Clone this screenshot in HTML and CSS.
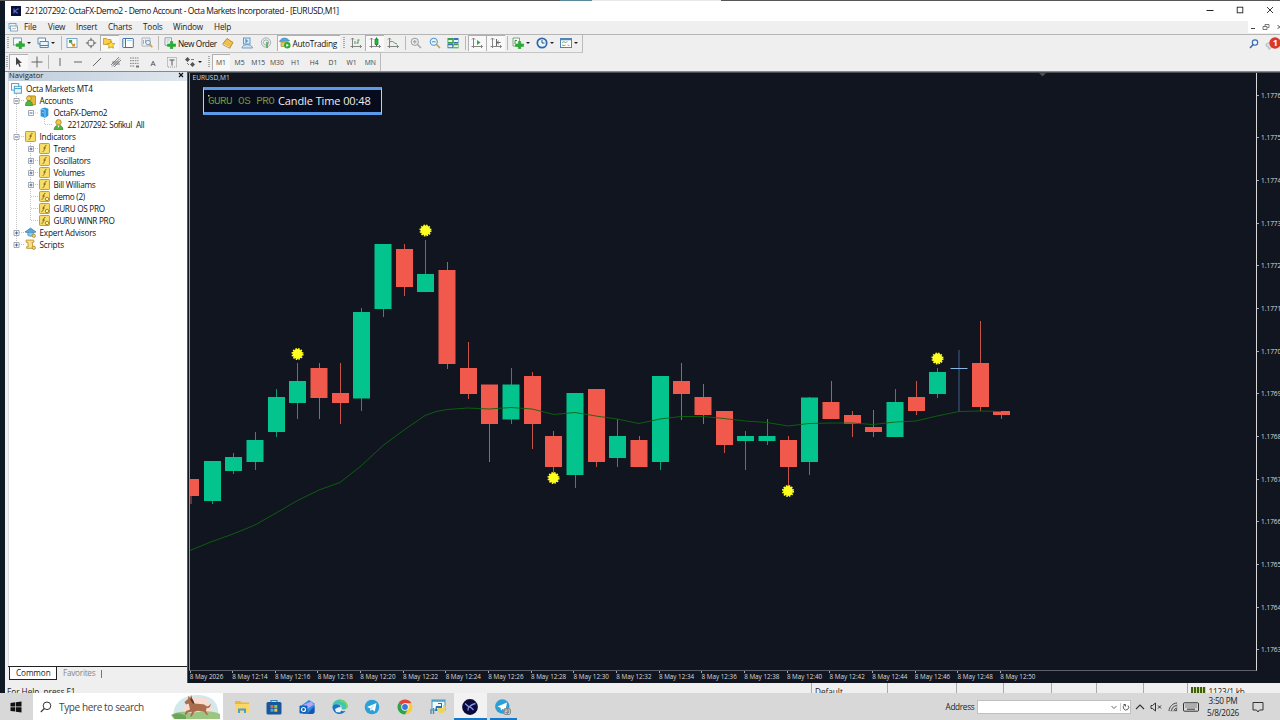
FILE: index.html
```html
<!DOCTYPE html>
<html lang="en">
<head>
<meta charset="utf-8">
<title>221207292: OctaFX-Demo2 - Demo Account</title>
<link rel="stylesheet" href="styles.css">
</head>
<body>
<svg class="defs" width="0" height="0">
  <defs>
    <symbol id="func" viewBox="0 0 10 10"><rect x=".5" y=".5" width="9" height="9" rx=".6" fill="#f8df6a" stroke="#c79a24" stroke-width=".9"/><path d="M6.800 2.300C5.500 2 5.500 3 5.100 4.700S4.500 7.900 3.300 7.700M4 4.600h2.300" fill="none" stroke="#7a5a14" stroke-width=".8"/></symbol>
    <symbol id="funcgear" viewBox="0 0 10 10"><rect x=".5" y=".5" width="9" height="9" rx=".6" fill="#f8df6a" stroke="#c79a24" stroke-width=".9"/><path d="M5.800 2.300C4.500 2 4.500 3 4.100 4.700S3.500 7.900 2.300 7.700M3 4.600h2.300" fill="none" stroke="#7a5a14" stroke-width=".8"/><circle cx="7.300" cy="7.300" r="1.600" fill="#fff3b0" stroke="#9c7414" stroke-width=".8"/></symbol>
    <symbol id="burst" viewBox="-7 -7 14 14"><circle r="4.900" fill="#ffff1e"/><circle r="5.200" fill="none" stroke="#ffff1e" stroke-width="1.700" stroke-dasharray="1.500 1.222"/></symbol>
    <symbol id="axes" viewBox="0 0 12 12"><path d="M2.500 1v10M.5 9.500h11M1 2.500l1.500-1.500L4 2.500M10 8l1.500 1.500L10 11" fill="none" stroke="#777" stroke-width=".9"/></symbol>
  </defs>
</svg>
<div class="desktop">
  <div class="topstrip"><i></i></div>
  <div class="window">
    <header class="titlebar">
      <svg class="logo" viewBox="0 0 10 10"><rect width="10" height="10" fill="#0b0f38"/><path d="M3 2.500v5M7.500 2.500L3.600 5l3 2.300" fill="none" stroke="#5a73d8" stroke-width="1.100"/></svg>
      <span class="caption">221207292: OctaFX-Demo2 - Demo Account - Octa Markets Incorporated - [EURUSD,M1]</span>
      <div class="winbtns">
        <svg viewBox="0 0 8 8"><path d="M.5 4.500h7" stroke="#222" fill="none"/></svg>
        <svg viewBox="0 0 8 8"><rect x="1.200" y="1.200" width="5.600" height="5.600" stroke="#222" fill="none" stroke-width=".9"/></svg>
        <svg viewBox="0 0 8 8"><path d="M1 1l6 6M7 1L1 7" stroke="#222" fill="none" stroke-width=".9"/></svg>
      </div>
    </header>
    <nav class="menubar">
      <svg class="mico" viewBox="0 0 10 9"><rect x="1" y=".5" width="7" height="5" fill="#e8f4fc" stroke="#5b9bc8" stroke-width=".8"/><rect x="2.500" y="3" width="7" height="5" fill="#fff" stroke="#5b9bc8" stroke-width=".8"/><path d="M4 6.500l1.500-1.500 1 1L8.500 4.500" stroke="#d08040" fill="none" stroke-width=".7"/></svg>
      <span class="m1">File</span><span class="m2">View</span><span class="m3">Insert</span><span class="m4">Charts</span><span class="m5">Tools</span><span class="m6">Window</span><span class="m7">Help</span>
      <div class="mdibtns">
        <svg viewBox="0 0 8 8"><path d="M2 5.500h4" stroke="#444"/></svg>
        <svg viewBox="0 0 8 8"><path d="M3 3.500V1.500h4v3H5.500M1 3.500h4v3H1z" stroke="#555" fill="none" stroke-width=".8"/></svg>
        <svg viewBox="0 0 8 8"><path d="M2.500 2l4 4M6.500 2l-4 4" stroke="#444" stroke-width=".9"/></svg>
      </div>
    </nav>
    <div class="tbrow row1">
      <div class="toolbar">
        <i class="grip"></i>
        <span class="drop"><svg viewBox="0 0 12 12"><rect x=".5" y="1" width="8" height="7" fill="#f4fbff" stroke="#6b8ba5" stroke-width=".8"/><path d="M6 4.500h2.600v2.300H11.500v2.600H8.600v2.300H6V9.400H3.200V6.800H6z" fill="#25b32e" stroke="#168020" stroke-width=".4"/></svg><b></b></span>
        <span class="drop"><svg viewBox="0 0 12 12"><path d="M1 1h7.500v6H1z" fill="#fff" stroke="#4c7fae" stroke-width=".9"/><path d="M3 4.500h8.300v6H3z" fill="#eaf4fc" stroke="#4c7fae" stroke-width=".9"/><path d="M3 8.500h8.500" stroke="#4c7fae"/></svg><b></b></span>
        <i class="sep"></i>
        <span class="tool"><svg viewBox="0 0 12 12"><rect x="1" y="1.500" width="10" height="9" fill="#fff" stroke="#6ea0c8" stroke-width=".9"/><path d="M3 3h3.200v2.800H3z" fill="#2fa84a"/><path d="M5 6l3.500 3M8.500 6.500V9H6" stroke="#d08820" fill="none" stroke-width="1.200"/></svg></span>
        <span class="tool"><svg viewBox="0 0 12 12"><circle cx="6" cy="6" r="3.300" fill="none" stroke="#666" stroke-width=".9"/><path d="M6 .8v3.200M6 8v3.200M.8 6H4M8 6h3.200" stroke="#666" stroke-width="1"/></svg></span>
        <span class="tool on"><svg viewBox="0 0 12 12"><path d="M.5 1.500h3l1 1H8V7.500H.5z" fill="#f7cf4d" stroke="#b98a1b" stroke-width=".7"/><path d="M8 4l1.200 2.400 2.600.3-1.900 1.800.5 2.700L8 10l-2.400 1.200.5-2.700L4.200 6.700l2.600-.3z" fill="#ffe040" stroke="#c08b10" stroke-width=".7"/></svg></span>
        <span class="tool"><svg viewBox="0 0 12 12"><rect x=".8" y="1.500" width="10.500" height="9" rx=".5" fill="#fff" stroke="#3f76ae"/><path d="M3.500 2v8" stroke="#3f76ae"/><path d="M5 3.500h5M1.500 4h1.200M1.500 6h1.200" stroke="#8fb4d8" stroke-width=".7"/></svg></span>
        <span class="tool"><svg viewBox="0 0 12 12"><path d="M1 1h8v8H1z" fill="#f5f5f5" stroke="#9aa6b0" stroke-width=".8"/><path d="M2.500 7V3M4.500 6V2.500" stroke="#999" stroke-width=".8"/><circle cx="7" cy="5.500" r="2.300" fill="#e4f2fb" stroke="#6d8ba4" stroke-width=".9"/><path d="M8.700 7.300l2.600 3" stroke="#c79a4a" stroke-width="1.400"/></svg></span>
        <i class="sep s5"></i>
        <span class="wide neworder"><svg viewBox="0 0 12 12"><path d="M1 .8h6.500v7.500H1z" fill="#f4f8fb" stroke="#7d8d9a" stroke-width=".8"/><path d="M2.500 3h3.500M2.500 5h2" stroke="#8aa" stroke-width=".7"/><path d="M6.300 4.500h2.500v2.400h2.900v2.500H8.800v2.300H6.300V9.400H3.500V6.900h2.800z" fill="#25b32e" stroke="#168020" stroke-width=".4"/></svg>New Order</span>
        <span class="tool"><svg viewBox="0 0 12 12"><path d="M1 6.500L5 1.500l6 4-3 5.200z" fill="#f1c04a" stroke="#b27b17" stroke-width=".8"/><path d="M1 6.500v1.300l6.800 3.500V10" fill="#fff3cf" stroke="#b27b17" stroke-width=".7"/></svg></span>
        <span class="tool"><svg viewBox="0 0 12 12"><rect x="2.500" y="1" width="6.500" height="6" fill="#dff0fb" stroke="#4c94c8" stroke-width=".9"/><path d="M5 2v4M5 4h2.200" stroke="#3377bb" stroke-width="1"/><path d="M1 11c0-4.500 10-4.500 10.500 0z" fill="#cfe3f2" stroke="#5e8fb5" stroke-width=".8"/></svg></span>
        <span class="tool"><svg viewBox="0 0 12 12"><g fill="none" stroke="#9aa6ad" stroke-width=".9"><circle cx="6" cy="5.500" r="4.600"/><circle cx="6" cy="5.500" r="2.600"/></g><path d="M6 5h2v6H6z" fill="#5fb868"/></svg></span>
        <span class="wide auto on"><svg viewBox="0 0 12 12"><path d="M.5 4.500C2.500 0 8 0 10.500 4z" fill="#5aa7dd" stroke="#2f78ac" stroke-width=".6"/><path d="M2 5h7v4.500H2z" fill="#e9c55a" stroke="#a8862a" stroke-width=".6"/><circle cx="8.300" cy="8.300" r="3.200" fill="#27ad35"/><path d="M7.400 6.700v3.200l2.500-1.600z" fill="#fff"/></svg>AutoTrading</span>
        <i class="grip g2"></i>
        <span class="tool"><svg viewBox="0 0 12 12"><use href="#axes"/><path d="M5 7V4M8 6.500V2.500M8 3h1.500M6.500 6H8" stroke="#3f9c4c" fill="none"/></svg></span>
        <span class="tool on"><svg viewBox="0 0 12 12"><use href="#axes"/><path d="M7.500 .5v8.500" stroke="#19802a"/><path d="M6 2h3v5.500H6z" fill="#26b83a" stroke="#157a23" stroke-width=".7"/></svg></span>
        <span class="tool"><svg viewBox="0 0 12 12"><use href="#axes"/><path d="M3 5c3-2 3 1 7 2" stroke="#3f9c4c" fill="none"/></svg></span>
        <i class="sep s4"></i>
        <span class="tool"><svg viewBox="0 0 12 12"><circle cx="4.800" cy="4.800" r="3.600" fill="#eee" stroke="#999"/><path d="M3 4.800h3.600M4.800 3v3.600" stroke="#999"/><path d="M7.500 7.500l3.500 3.500" stroke="#aaa" stroke-width="1.700"/></svg></span>
        <span class="tool"><svg viewBox="0 0 12 12"><circle cx="4.800" cy="4.800" r="3.600" fill="#e8f6ff" stroke="#4a8cc9"/><path d="M3 4.800h3.600" stroke="#4a8cc9"/><path d="M7.500 7.500l3.500 3.500" stroke="#d0a03c" stroke-width="1.700"/></svg></span>
        <span class="tool"><svg viewBox="0 0 12 12"><path d="M.5 1H6v5H.5z" fill="#3aa050"/><path d="M6.300 1h5.200v5H6.300zM.5 6.300H6v5H.5z" fill="#3874b5"/><path d="M6.300 6.300h5.200v5H6.300z" fill="#3aa050"/><path d="M1.300 3h4v2h-4zM7 3h4v2H7zM1.300 8.300h4v2h-4zM7 8.300h4v2H7z" fill="#e8f5e0"/></svg></span>
        <i class="sep s5"></i>
        <span class="tool on"><svg viewBox="0 0 12 12"><use href="#axes"/><path d="M6 3l3.500 2.500L6 8z" fill="#3aa545"/></svg></span>
        <span class="tool on"><svg viewBox="0 0 12 12"><use href="#axes"/><path d="M6.500 2v7M7 5.500h3.500M8.800 3.800L7 5.500l1.800 1.700" fill="none" stroke="#666"/></svg></span>
        <i class="sep s5"></i>
        <span class="drop"><svg viewBox="0 0 12 12"><path d="M1 1h6.500v8H1z" fill="#f4fbf4" stroke="#6b8b6f" stroke-width=".8"/><path d="M3 7V3.500h2" stroke="#3a8f46" fill="none"/><path d="M6.300 4.500h2.500v2.400h2.900v2.500H8.800v2.300H6.300V9.400H3.500V6.900h2.800z" fill="#25b32e" stroke="#168020" stroke-width=".4"/></svg><b></b></span>
        <span class="drop"><svg viewBox="0 0 12 12"><circle cx="6" cy="6" r="4.700" fill="#e9f3fb" stroke="#2c66ac" stroke-width="1.700"/><path d="M6 3v3h2.500" fill="none" stroke="#345" stroke-width=".9"/></svg><b></b></span>
        <span class="drop"><svg viewBox="0 0 12 12"><rect x=".5" y="1.500" width="11" height="9" fill="#fff" stroke="#4f84b4"/><path d="M.5 2.500h11" stroke="#4f84b4" stroke-width="1.500"/><path d="M2 5.500l2-.8 1.500.8 2-.8M2 8l2 .6L5.500 8M7.500 8l2 .6" stroke="#7a9a70" fill="none" stroke-width=".9"/></svg><b></b></span>
      </div>
    </div>
    <div class="tbrow row2">
      <div class="toolbar">
        <i class="grip"></i>
        <span class="tool on first"><svg viewBox="0 0 12 12"><path d="M4 1v8.300l2-1.900 1.500 3.500 1.300-.6L7.300 7H10z" fill="#444"/></svg></span>
        <span class="tool"><svg viewBox="0 0 12 12"><path d="M6 .5v11M.5 6h11" stroke="#555" stroke-width=".9"/></svg></span>
        <i class="sep s4"></i>
        <span class="tool"><svg viewBox="0 0 12 12"><path d="M6 2v8" stroke="#555" stroke-width=".9"/></svg></span>
        <span class="tool"><svg viewBox="0 0 12 12"><path d="M2 6h8" stroke="#555" stroke-width=".9"/></svg></span>
        <span class="tool"><svg viewBox="0 0 12 12"><path d="M2 10l8-8" stroke="#555" stroke-width=".9"/></svg></span>
        <span class="tool"><svg viewBox="0 0 12 12"><path d="M1 9l8-8M2 10.500l8-8M4 11l7-7M2 6h7M3 8h7" stroke="#666" stroke-width=".8"/></svg></span>
        <span class="tool"><svg viewBox="0 0 12 12"><path d="M2 2h8.500M2 4.700h8.500M2 7.400h8.500M2 10h5" stroke="#666" stroke-width=".8" stroke-dasharray="1.600 .8"/><path d="M8 9.500h3v2H8z" fill="#777"/></svg></span>
        <span class="tool lbl big">A</span>
        <span class="tool"><svg viewBox="0 0 12 12"><rect x="1.500" y="1.500" width="9" height="9.500" fill="none" stroke="#888" stroke-width=".9" stroke-dasharray="1 1"/><path d="M3.500 4h5M6 4v5.500" stroke="#555"/></svg></span>
        <span class="drop"><svg viewBox="0 0 12 12"><path d="M1 3.500L3.500 1 6 3.500 3.500 6zM6 8.500L8.500 6 11 8.500 8.500 11z" fill="#555"/><path d="M3 7l2 2M7 3.500h3" stroke="#777"/></svg><b></b></span>
        <i class="grip g3"></i>
        <span class="tool lbl on">M1</span><span class="tool lbl">M5</span><span class="tool lbl">M15</span><span class="tool lbl">M30</span><span class="tool lbl">H1</span><span class="tool lbl">H4</span><span class="tool lbl">D1</span><span class="tool lbl">W1</span><span class="tool lbl">MN</span>
      </div>
    </div>
    <div class="tbicons">
      <svg viewBox="0 0 10 10"><circle cx="6" cy="3.600" r="2.700" fill="#eef5ff" stroke="#3a67b0" stroke-width="1.100"/><path d="M4.200 5.500L1 9" stroke="#3a67b0" stroke-width="1.500"/></svg>
      <svg class="bell" viewBox="0 0 16 14"><path d="M1 8c0-3 7-3 7 0s-3 2.500-4 4.500L3.500 10C2 10 1 9.500 1 8z" fill="#ddd" stroke="#aaa" stroke-width=".8"/><circle cx="10" cy="6" r="5.700" fill="#d8392b"/><text x="7.800" y="9.200" class="badge">1</text></svg>
    </div>
    <main class="work">
      <aside class="navigator">
        <div class="navhead"><span>Navigator</span><svg viewBox="0 0 6 6"><path d="M1 1l4 4M5 1L1 5" stroke="#111" stroke-width="1.200"/></svg></div>
        <div class="tree">
          <svg class="lines" viewBox="8 82 60 175"><g fill="none" stroke="#b4b4b4" stroke-width=".8" stroke-dasharray="1 1"><path d="M16.500 94v150M17 100.500h8M17 136.500h8M17 232.500h8M17 244.500h8M31 113h8M44.500 117v7.500h8M30.500 141v79M31 148.500h8M31 160.500h8M31 172.500h8M31 184.500h8M31 196.500h8M31 208.500h8M31 220.500h8"/></g>
            <g fill="#fff" stroke="#8a94a0" stroke-width=".8"><path d="M14 98.500h5v5h-5zM28.500 110.500h5v5h-5zM14 134.500h5v5h-5zM28.500 146.500h5v5h-5zM28.500 158.500h5v5h-5zM28.500 170.500h5v5h-5zM28.500 182.500h5v5h-5zM14 230.500h5v5h-5zM14 242.500h5v5h-5z"/></g>
            <path d="M15 101h3M29.500 113h3M15 137h3M29.500 149h3M31 147.500v3M29.500 161h3M31 159.500v3M29.500 173h3M31 171.500v3M29.500 185h3M31 183.500v3M15 233h3M16.500 231.500v3M15 245h3M16.500 243.500v3" stroke="#345a90" stroke-width=".9"/></svg>
          <div class="node l0"><svg viewBox="0 0 10 10"><rect x=".5" y=".5" width="6.500" height="6" fill="#fff" stroke="#4f9fd0" stroke-width=".9"/><rect x="3" y="3" width="6.500" height="6.300" fill="#e4f4fd" stroke="#4f9fd0" stroke-width=".9"/><path d="M3 5h6.500" stroke="#4f9fd0"/></svg>Octa Markets MT4</div>
          <div class="node l1"><svg viewBox="0 0 10 10"><rect x="2.500" y=".8" width="7.300" height="8.200" rx="1" fill="#e4b93c" stroke="#9d7a18" stroke-width=".7"/><circle cx="3.500" cy="3" r="2.200" fill="#f3cf50" stroke="#8a6a14" stroke-width=".5"/><path d="M.3 9.700c0-6 6.500-6 6.500 0z" fill="#4cb83c" stroke="#2a7a20" stroke-width=".5"/></svg>Accounts</div>
          <div class="node l2"><svg viewBox="0 0 10 10"><path d="M1.500 1.800l3.500-1.300 3.500 1V8L5.500 9.800 1.500 8.500z" fill="#2f95dc"/><path d="M1.500 2l4 .8V9.700M2.700 5l2 .4" stroke="#a8d8f6" stroke-width=".7" fill="none"/></svg>OctaFX-Demo2</div>
          <div class="node l3"><svg viewBox="0 0 10 10"><circle cx="5" cy="3" r="2.500" fill="#e8c948" stroke="#97761a" stroke-width=".6"/><path d="M1 9.800c0-5.500 8-5.500 8 0z" fill="#4cba38" stroke="#267a1c" stroke-width=".6"/><path d="M4 6l1 2 1-2z" fill="#fff"/></svg><span class="acct">221207292: Sofikul &nbsp;All</span></div>
          <div class="node l1"><svg><use href="#func"/></svg>Indicators</div>
          <div class="node l2"><svg><use href="#func"/></svg>Trend</div>
          <div class="node l2"><svg><use href="#func"/></svg>Oscillators</div>
          <div class="node l2"><svg><use href="#func"/></svg>Volumes</div>
          <div class="node l2"><svg><use href="#func"/></svg>Bill Williams</div>
          <div class="node l2"><svg><use href="#funcgear"/></svg>demo (2)</div>
          <div class="node l2"><svg><use href="#funcgear"/></svg>GURU OS PRO</div>
          <div class="node l2"><svg><use href="#funcgear"/></svg>GURU WINR PRO</div>
          <div class="node l1"><svg viewBox="0 0 10 10"><path d="M0 4.500L5 1l5 3.500L5 6z" fill="#57a8dc" stroke="#2f759f" stroke-width=".6"/><path d="M2.500 5.500v2c1 1.200 4 1.200 5 0v-2" fill="#8fc6e6" stroke="#2f759f" stroke-width=".5"/><circle cx="8" cy="8" r="1.500" fill="#f4d869" stroke="#a5801c" stroke-width=".7"/></svg>Expert Advisors</div>
          <div class="node l1"><svg viewBox="0 0 10 10"><path d="M1 1h7v2H6.500l1 5.500H1.500V7H3L2.500 3H1z" fill="#f8e08a" stroke="#bb922c" stroke-width=".8"/><circle cx="8" cy="8" r="1.500" fill="#f4d869" stroke="#a5801c" stroke-width=".7"/></svg>Scripts</div>
        </div>
        <div class="tabs"><span class="tab active">Common</span><span class="tab">Favorites</span><i></i></div>
      </aside>
      <section class="chart">
        <div class="plotrow">
          <div class="plot">
            <svg class="candles" viewBox="190 73 1067 598">
              <path d="M1039 73h7l-3.500 3.500z" fill="#4a4f56"/>
              <path d="M212.500 461v43M233.500 453v21M255.500 432v38M276.500 389v48M297.500 363v56M361.500 308v103M383.500 244v73M425.500 240v52M511.500 368v56M575.500 393v95M617.500 419v48M660.500 376v94M745.500 431v39M767.500 419v26M809.500 397v78M895.500 389v48M937.500 368v30" class="wick up"/>
              <path d="M319.500 363v56M340.500 363v61M404.500 244v52M447.500 262v107M468.500 342v57M489.500 385v77M532.500 372v77M553.500 431v45M596.500 389v78M639.500 436v31M681.500 363v57M703.500 384v40M724.500 411v42M788.500 436v54M831.500 381v38M852.500 411v26M873.500 410v27M916.500 381v34M980.500 321v90M1001.500 411v8M191 479v25" class="wick down"/>
              <path class="body up" d="M204 461h17v40h-17zM225 457h17v14h-17zM246.500 440h17v22h-17zM268 397h17v35h-17zM289 381h17v22h-17zM353 312h17v86.500h-17zM374.500 244h17v65h-17zM417 274h17v18h-17zM502.500 384.500h17v35h-17zM566.500 393h17v82h-17zM609 436h17v22h-17zM652 376h17v86h-17zM737 436h17v5h-17zM758.500 436h17v5h-17zM801 397.500h17v64.500h-17zM886.500 402h17v35h-17zM929 372h17v22h-17z"/>
              <path class="body down" d="M190 479h9v17h-9zM310.500 368h17v30h-17zM332 393h17v10h-17zM396 249h17v38h-17zM438.500 270h17v94h-17zM460 368h17v26h-17zM481 384.500h17v39.500h-17zM524 376h17v48h-17zM545 436h17v31h-17zM588 389h17v73h-17zM630.500 440h17v27h-17zM673 381h17v13h-17zM694.500 397h17v18h-17zM716 411h17v34h-17zM780 440h17v27h-17zM822.500 402h17v17h-17zM844 415h17v9h-17zM865 427h17v5h-17zM908 397h17v14h-17zM972 363h17v44h-17zM993 411h17v4h-17z"/>
              <path d="M959 350v62" stroke="#40618f" fill="none"/><path d="M950.500 368.500h17" stroke="#86b5e8" fill="none"/>
              <path class="ma" d="M190 550.500L212 541.500 233 534 255 525 276 513 297.500 500.500 319 490 340 482.500 361.500 465.500 383 445.500 404 430 425 415.500 436 411.500 447 409.500 468 408 489 409 511 407.500 532 409 554 414.500 575 412.500 596 416 617 419 639 423.500 660 419 681 416.500 703 416.500 724 418.500 745 421 767 422.500 788 426 809 423.500 831 423 852 423 873 424.500 895 422 916 421 937 416 959 411.500 980 411 1001 411.500"/>
              <use href="#burst" x="290.500" y="347" width="14" height="14"/><use href="#burst" x="418.500" y="223.500" width="14" height="14"/><use href="#burst" x="546.500" y="471" width="14" height="14"/><use href="#burst" x="781" y="484" width="14" height="14"/><use href="#burst" x="930.500" y="351.500" width="14" height="14"/>
            </svg>
            <span class="symbol">EURUSD,M1</span>
            <div class="timer"><em>GURU OS PRO</em><strong>Candle Time 00:48</strong></div>
          </div>
          <div class="prices"><span>1.1776</span><span>1.1775</span><span>1.1774</span><span>1.1773</span><span>1.1772</span><span>1.1771</span><span>1.1770</span><span>1.1769</span><span>1.1768</span><span>1.1767</span><span>1.1766</span><span>1.1765</span><span>1.1764</span><span>1.1763</span></div>
        </div>
        <div class="times"><span>8 May 2026</span><span>8 May 12:14</span><span>8 May 12:16</span><span>8 May 12:18</span><span>8 May 12:20</span><span>8 May 12:22</span><span>8 May 12:24</span><span>8 May 12:26</span><span>8 May 12:28</span><span>8 May 12:30</span><span>8 May 12:32</span><span>8 May 12:34</span><span>8 May 12:36</span><span>8 May 12:38</span><span>8 May 12:40</span><span>8 May 12:42</span><span>8 May 12:44</span><span>8 May 12:46</span><span>8 May 12:48</span><span>8 May 12:50</span></div>
      </section>
    </main>
    <footer class="status"><span class="help">For Help, press F1</span><span class="c1">Default</span><span class="c2"></span><span class="c3"></span><span class="c4"></span><span class="c5"></span><span class="c3"></span><span class="c6"></span><span class="net"><i></i>1123/1 kb</span></footer>
  </div>
  <div class="taskbar">
    <span class="start"><svg viewBox="0 0 12 12"><path d="M.5 2l4.800-.7v4.300H.5zM6 1.200l5.500-.8v5.200H6zM.5 6.300h4.800v4.300L.5 9.900zM6 6.300h5.500v5.200L6 10.700z" fill="#111"/></svg></span>
    <div class="search">
      <svg class="mag" viewBox="0 0 12 12"><circle cx="7" cy="4.800" r="3.800" fill="none" stroke="#333"/><path d="M4.300 7.500L.8 11" stroke="#333" stroke-width="1.100"/></svg>
      <span>Type here to search</span>
      <svg class="horse" viewBox="0 0 52 26"><path d="M3 24C0 12 10 1 26 1s23 9 21 23z" fill="#d3e8ea"/><path d="M12 22C10 10 18 3 28 3s14 9 13 19z" fill="#f8dcd2"/><path d="M0 21c7-4 13-4 21-2 10-2 20-3 28 1v5H3z" fill="#9cc582"/><path d="M1 21c5-3 9-2 14 1v3H4z" fill="#6aa65a"/><path d="M13.500 8l3.500-3 .5-3.500L19 4l1.500-3 .8 4 1.700 4.500 9 .8c1.500 0 2.500 1.200 4 2.200l2.500-1 .8-2c1 2-.5 4.500-2.500 4.500l-1.300.3-.5 2.700 2 3.500-1 .8-3-3.500-6-1-3.500 1-3 5-1.300-.5 1.700-4.600-3.900.6-2 2.700-1.300-.4 1.300-3.600 4-1.600-1.300-6-2.700 1.100z" fill="#a96d4b"/><path d="M20 3.500l2 2.500 1.700 4-2.200-.8-2-3.200z" fill="#5c3426"/></svg>
    </div>
    <div class="apps">
      <span><svg viewBox="0 0 16 16"><path d="M1 2h5l1.500 1.500H15V13H1z" fill="#e8b83d"/><path d="M1 5h14v8.500H1z" fill="#fbd768"/><path d="M4 14V9.500h8V14h-2v-2.500H6V14z" fill="#4a9edb"/></svg></span>
      <span><svg viewBox="0 0 16 16"><path d="M5 3.500V1.500h6v2" fill="none" stroke="#3186c8" stroke-width="1.200"/><rect x=".5" y="3" width="15" height="12.500" rx="1.500" fill="#17579a"/><path d="M4.500 6h3v3h-3z" fill="#e8643c"/><path d="M8.300 6h3v3h-3z" fill="#91c43e"/><path d="M4.500 9.700h3v3h-3z" fill="#41a8e8"/><path d="M8.300 9.700h3v3h-3z" fill="#f7c53c"/></svg></span>
      <span><svg viewBox="0 0 16 16"><path d="M3 6l7-5 5.500 3.500V13L13 15H4z" fill="#2d8ce0"/><path d="M4 6l8-3.500 3 3L8 10z" fill="#b7a6f4"/><path d="M8 15l7.500-8v6.500L14 15z" fill="#1556b4"/><rect x=".5" y="6.500" width="8" height="8" rx="1" fill="#1261bd"/><circle cx="4.500" cy="10.500" r="2" fill="none" stroke="#fff" stroke-width="1.200"/></svg></span>
      <span><svg viewBox="0 0 16 16"><path d="M.5 7C1-1 14-2 15.500 7c0 3-3 4-6 3 1-3-1-5-4-4.500S1 7.500.5 9z" fill="#43c5b5"/><path d="M.5 8C2 4 8 5 8.500 7.500 6 9 8 13 13.500 12 10 17 1 16 .5 8z" fill="#1974c6"/><path d="M8 2c5-1 8 4 6.500 7" stroke="#78d65a" stroke-width="1.700" fill="none"/><path d="M3 10l4-2 3 2-2 3.500-4-.5z" fill="#e8f2f5"/></svg></span>
      <span><svg viewBox="0 0 16 16"><circle cx="8" cy="8" r="7.300" fill="#2ba0d8"/><path d="M3 8l9.500-4-1.700 8.500-2.800-2-1.500 1.500-.4-2.700z" fill="#fff"/><path d="M6 9.300L11 5.500l-3.500 4.500z" fill="#b8d8ea"/></svg></span>
      <span><svg viewBox="0 0 16 16"><path d="M8 8L1.500 4.300A7.500 7.500 0 0 1 14.500 4.300H8z" fill="#e04434"/><path d="M8 8l6.500-3.700A7.500 7.500 0 0 1 8 15.500l3-5.700z" fill="#f8cd3c"/><path d="M8 8L1.500 4.300A7.500 7.500 0 0 0 8 15.500l3-5.500z" fill="#31a150"/><circle cx="8" cy="8" r="3.700" fill="#fff"/><circle cx="8" cy="8" r="2.900" fill="#3977dd"/></svg></span>
      <span><svg viewBox="0 0 16 16"><rect x="2" y="1" width="13" height="10" fill="#f2fafd" stroke="#3d9bc2"/><path d="M2 2h13" stroke="#3d9bc2" stroke-width="1.500"/><path d="M6 7h5V5H8V4h4v5H7v3H5z" fill="#2f71aa"/><path d="M8 13V9h5V6h1.500c2 2 1 7-1.500 8H9.500z" fill="#ead564"/><path d="M1 10v5M3.500 9v6" stroke="#4f8cb2" stroke-width="1.400"/></svg></span>
      <span class="active"><svg viewBox="0 0 16 16"><circle cx="8" cy="8" r="7.900" fill="#080a3c"/><path d="M3 4.500l4 3.500c2-2 4-3 6.500-3.500M6 11.500c0-4 2-4 3.500-2.500l2 2" fill="none" stroke="#8694e8" stroke-width="1.300"/></svg></span>
      <span class="open"><svg viewBox="0 0 16 16"><circle cx="7.300" cy="7.500" r="7.200" fill="#2ba0d8"/><path d="M2.500 7.500L12 3.500l-1.700 8.500-2.800-2L6 11.500l-.4-2.700z" fill="#fff"/><rect x="8" y="9" width="8" height="7" rx="3" fill="#858b90"/><path d="M10 11h2v1.500h-2v2h2M13 11h1.500v3.500H13" stroke="#ddd" fill="none" stroke-width=".7"/></svg></span>
    </div>
    <div class="tray">
      <span class="addr">Address</span>
      <div class="addrbox"><svg viewBox="0 0 8 8"><path d="M1.500 3L4 5.500 6.500 3" fill="none" stroke="#666"/></svg><span><svg viewBox="0 0 8 8"><path d="M2.500 2A2.700 2.700 0 1 0 6 2.500M1.500 1.500h2v2" fill="none" stroke="#555"/></svg></span></div>
      <svg class="t1" viewBox="0 0 10 10"><path d="M1 7l4-4 4 4" fill="none" stroke="#333" stroke-width="1.100"/></svg>
      <svg class="t2" viewBox="0 0 12 10"><path d="M1 3.500h1.500L5.500 1v8l-3-2.500H1z" fill="none" stroke="#333"/><path d="M8 3.500l3 3M11 3.500l-3 3" stroke="#333"/></svg>
      <svg class="t3" viewBox="0 0 10 10"><path d="M1 9C1 5 5 1 9 1M3.500 9c0-3 2.500-5.500 5.500-5.500M6 9c0-1.500 1.500-3 3-3" fill="none" stroke="#444" stroke-width="1"/><path d="M9 6.500V9H6.500z" fill="#333"/><path d="M1.500 9h7.500V1.500" fill="none" stroke="#999" stroke-width=".6"/></svg>
      <svg class="t4" viewBox="0 0 16 10"><rect x=".5" y=".8" width="15" height="8.400" rx=".8" fill="none" stroke="#333"/><path d="M2.500 3h11M2.500 5h11" stroke="#333" stroke-dasharray="1 1"/><path d="M4 7.200h8" stroke="#333"/></svg>
      <div class="clock"><span>3:50 PM</span><span>5/8/2026</span></div>
      <svg class="t5" viewBox="0 0 12 12"><path d="M1 1.500h10v7.500H7.500L6 11 4.500 9H1z" fill="none" stroke="#333"/></svg>
    </div>
  </div>
</div>
</body>
</html>
```
FILE: styles.css
```css
*{box-sizing:border-box}
html,body{margin:0;width:1280px;height:720px;overflow:hidden}
body{font-family:"Open Sans","Noto Sans",sans-serif;font-size:8.2px;color:#222;background:#0d1a26}
i,em{font-style:normal}
span{white-space:nowrap}
svg{display:block;flex:none}
.defs{position:absolute}
.desktop{width:1280px;height:720px;display:flex;flex-direction:column}
.topstrip{height:1px;background:#5a5658;display:flex;padding-left:560px}
.topstrip i{width:720px;background:linear-gradient(90deg,#5c8a9b 32px,#e8e8e8 32px 161px,#5a5658 161px)}
.window{height:692px;margin-left:5px;background:#efefef;display:flex;flex-direction:column;position:relative;overflow:hidden}

.titlebar{height:20px;background:#fff;display:flex;align-items:center;padding-left:6px;flex:none}
.logo{width:10px;height:10px;margin-right:4px;margin-top:-1px}
.caption{font-size:8.500px;letter-spacing:-.42px;color:#111;margin-top:-1px}
.winbtns{margin-left:auto;display:flex;gap:22px;margin-right:6px;padding-bottom:2px}
.winbtns svg{width:8px;height:8px}
.menubar{height:13.500px;display:flex;align-items:center;padding-left:3px;flex:none;position:relative;border-bottom:1px solid #b5b5b5}
.mico{width:10px;height:9px}
.menubar span{font-size:8.200px;letter-spacing:-.15px;margin-top:-1px}
.m1{width:24px;margin-left:6px}.m2{width:28px}.m3{width:32px}.m4{width:35px}.m5{width:30px}.m6{width:41px}
.mdibtns{margin-left:auto;display:flex;gap:5px;background:#fff;padding:2px 0 2px 1px;margin-right:-3px}
.mdibtns svg{width:8px;height:8px}

.tbrow{display:flex;flex:none}
.row1{height:18.500px}.row2{height:17.500px}
.toolbar{display:flex;align-items:center;border-right:1px solid #bbb;border-bottom:1px solid #c4c4c4;height:18.500px}
.row2 .toolbar{border-bottom:0;height:18px;margin-left:-1.500px}
.grip{width:2px;height:12px;margin:0 1.500px 0 2px;background:repeating-linear-gradient(#aaa 0 1px,#efefef 1px 2px)}
.g2{margin:0 1.500px 0 3.500px}
.g3{margin:0 1.500px 0 3px}
.sep{width:4.200px;height:14px;background:linear-gradient(90deg,transparent 2px,#b8b8b8 2px 3px,transparent 3px);flex:none}
.s5{width:5px}.s4{width:4px}
.tool{width:18.680px;height:16px;display:flex;align-items:center;justify-content:center;flex:none}
.tool svg,.drop svg,.wide svg{width:12px;height:12px}
.on{background:#f8f8f8;box-shadow:inset 1px 1px 0 #b0b0b0}
.lbl{font-size:6.800px;color:#444}
.lbl.big{font-size:8px}
.drop{width:24px;display:flex;align-items:center;padding-left:2.500px;flex:none}
.drop b{border:2px solid transparent;border-top:2.500px solid #222;border-bottom:0;margin-left:2px}
.wide{display:flex;align-items:center;height:16px;font-size:8.300px;color:#111;flex:none}
.neworder{width:58px;padding-left:3px;gap:2px;letter-spacing:-.42px}
.auto{width:63px;padding-left:2px;gap:2px;margin-left:1.500px;letter-spacing:-.3px}
.tbicons{position:absolute;left:1244px;top:35.500px;display:flex;gap:7px;align-items:center}
.tbicons svg{width:10px;height:10px}
.tbicons .bell{width:16px;height:14px;margin-left:-1px}
.badge{font:bold 9px "Open Sans",sans-serif;fill:#fff}

.work{display:flex;height:612px;flex:none;border-top:1px solid #888}
.navigator{width:183px;display:flex;flex-direction:column;padding-left:3px}
.navhead{height:9.500px;background:linear-gradient(90deg,#bfcddc,#dfe6ee);display:flex;align-items:center;justify-content:space-between;padding:0 2.500px 2px 1px;font-size:7.600px}
.navhead svg{width:6px;height:6px}
.tree{height:585px;background:#fff;position:relative;padding-top:1px;border-left:1px solid #ddd}
.lines{position:absolute;left:-1px;top:.5px;width:60px;height:175px}
.node{height:12px;display:flex;align-items:center;gap:4px;position:relative;letter-spacing:-.18px;color:#111}
.node svg{width:11px;height:11px}
.acct{letter-spacing:-.46px;word-spacing:.5px}
.l0{padding-left:2px}.l1{padding-left:15.500px}.l2{padding-left:29.500px;letter-spacing:-.28px}.l3{padding-left:43.500px}
.tabs{height:15px;display:flex;border-top:1px solid #222}
.tab{padding:0 6px;color:#888;line-height:12px;height:13px;letter-spacing:-.25px}
.tab.active{color:#222;background:#fff;border:1px solid #222;border-top:0;margin-left:1px;width:48px;letter-spacing:-.1px}
.tabs i{width:1px;height:8px;background:#777;margin-top:3px}

.chart{flex:1;background:#11151f;color:#d8dade;border-left:1px solid #555;border-top:1px solid #4a4e56;display:flex;flex-direction:column;padding-left:1px}
.plotrow{display:flex;height:598px}
.plot{width:1068.500px;border-left:1px solid #8f969e;border-right:1px solid #d8d8d8;border-bottom:1px solid #5c6068;position:relative;flex:none}
.candles{width:1067px;height:598px}
.wick{fill:none;stroke-width:1}
.wick.up{stroke:#0c9b76}.wick.down{stroke:#c65348}
.body.up{fill:#02c48c}.body.down{fill:#f0594b}
.ma{fill:none;stroke:#0b650f;stroke-width:.9}
.symbol{position:absolute;left:3px;top:1.500px;font-size:6.600px;line-height:8px}
.timer{position:absolute;left:13.500px;top:14px;width:179px;height:28px;background:#060c1c;border:1px solid #ccd;border-width:3px 1px;border-top-color:#5b9ae6;border-bottom-color:#5b9ae6;display:flex;align-items:center;padding-left:4px;gap:4px}
.timer em{font-family:"Liberation Mono",monospace;font-size:11px;letter-spacing:-.58px;color:#6f9434;width:66px;white-space:nowrap;background:radial-gradient(#d8e070,#d8e070) 0 0/1.500px 1.500px no-repeat}
.timer strong{font-weight:400;font-size:11px;color:#eee;letter-spacing:-.1px;white-space:nowrap}
.prices{width:23px;overflow:hidden;padding-top:1px;display:flex;flex-direction:column}
.prices span{height:42.680px;line-height:43px;font-size:6.500px;display:flex}
.prices span::before{content:"";width:2px;height:1px;background:#aaa;margin:21px 2px 0 0;flex:none}
.times{display:flex;height:12px;font-size:6.300px;line-height:12px}
.times span{width:42.670px;flex:none;padding-left:1.200px;background:linear-gradient(#aaa,#aaa) 1px 0/1px 2px no-repeat}

.status{height:10px;display:flex;flex:none;overflow:hidden;line-height:17px}
.help{width:806px;padding-left:2px}
.status span+span{border-left:1px solid #aaa;padding-left:3px}
.status .c1{width:76px}.status .c2{width:68.500px}.status .c3{width:47px}.status .c4{width:48px}.status .c5{width:45px}.status .c6{width:44px}
.status .net{width:90px;display:flex;gap:3px;letter-spacing:-.2px}
.net i{width:15px;height:12px;margin-top:4px;background:repeating-linear-gradient(90deg,#3d5c18 0 2px,#c8df80 2px 3px)}

.taskbar{height:27px;background:#d8d8d8;display:flex;flex:none}
.start{width:33px;padding:8px 0 0 10px}
.start svg{width:12px;height:12px}
.search{width:190px;background:#fff;display:flex;align-items:center;padding-left:7px;font-size:10px;letter-spacing:-.38px;color:#444}
.mag{width:12px;height:12px;margin-right:7px}
.search span{width:114px}
.horse{width:52px;height:26px;margin-left:-1px}
.apps{display:flex;padding-left:2.500px}
.apps span{width:32.670px;display:flex;align-items:center;justify-content:center}
.apps svg{width:16px;height:16px}
.apps .active{background:#f2f2f2;border-bottom:2px solid #1678c8;padding-top:2px}
.apps .open{background:linear-gradient(#1678c8,#1678c8) 3px 25px/27px 2px no-repeat}
.tray{margin-left:auto;display:flex;align-items:center;width:334.500px;font-size:8.200px}
.addr{width:31.500px;letter-spacing:-.3px}
.addrbox{width:154px;height:14px;background:#fff;border:1px solid #c0c0c0;display:flex;align-items:center;justify-content:flex-end}
.addrbox svg{width:8px;height:8px}
.addrbox span{border-left:1px solid #ccc;padding-left:1px;margin-left:2px}
.t1{width:10px;height:10px;margin-left:4px}
.t2{width:12px;height:10px;margin-left:5px}
.t3{width:10px;height:10px;margin-left:6px}
.t4{width:16px;height:10px;margin-left:5px}
.clock{width:50px;display:flex;flex-direction:column;align-items:center;line-height:12px;margin-left:-1px;letter-spacing:-.25px}
.t5{width:12px;height:12px;margin-left:4px}
```
